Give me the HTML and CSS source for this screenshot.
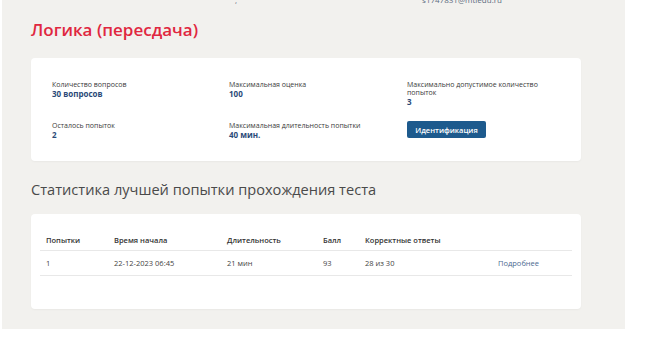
FILE: index.html
```html
<!DOCTYPE html>
<html lang="ru">
<head>
    <meta charset="UTF-8">
    <title>Логика (пересдача)</title>
    <link rel="stylesheet" href="styles.css">
</head>
<body>
    <div class="page">
        <div class="topbar">
            <span class="top-mark">,</span>
            <span class="top-email">s1747831@mtiedu.ru</span>
        </div>

        <h1 class="title">Логика (пересдача)</h1>

        <div class="card info">
            <div class="info-item">
                <div class="info-label">Количество вопросов</div>
                <div class="info-value">30 вопросов</div>
            </div>
            <div class="info-item">
                <div class="info-label">Максимальная оценка</div>
                <div class="info-value">100</div>
            </div>
            <div class="info-item">
                <div class="info-label">Максимально допустимое количество попыток</div>
                <div class="info-value">3</div>
            </div>
            <div class="info-item">
                <div class="info-label">Осталось попыток</div>
                <div class="info-value">2</div>
            </div>
            <div class="info-item">
                <div class="info-label">Максимальная длительность попытки</div>
                <div class="info-value">40 мин.</div>
            </div>
            <div class="info-item">
                <button class="btn">Идентификация</button>
            </div>
        </div>

        <h2 class="subtitle">Статистика лучшей попытки прохождения теста</h2>

        <div class="card stats">
            <table class="stats-table">
                <thead>
                    <tr>
                        <th class="c1">Попытки</th>
                        <th class="c2">Время начала</th>
                        <th class="c3">Длительность</th>
                        <th class="c4">Балл</th>
                        <th class="c5">Корректные ответы</th>
                        <th class="c6"></th>
                    </tr>
                </thead>
                <tbody>
                    <tr>
                        <td>1</td>
                        <td>22-12-2023 06:45</td>
                        <td>21 мин</td>
                        <td>93</td>
                        <td>28 из 30</td>
                        <td><a href="#" class="more">Подробнее</a></td>
                    </tr>
                </tbody>
            </table>
        </div>
    </div>
</body>
</html>
```

FILE: styles.css
```css
* {
    box-sizing: border-box;
    margin: 0;
    padding: 0;
}

body {
    background: #fff;
    font-family: "Open Sans", "Liberation Sans", sans-serif;
}

.page {
    margin-left: 2px;
    width: 623px;
    height: 329px;
    background: #f2f1ee;
    padding: 0 29px;
}

.topbar {
    height: 5px;
    overflow: hidden;
    display: flex;
    align-items: flex-end;
    font-size: 8px;
    line-height: 10px;
    color: #5c6b80;
}

.top-mark {
    margin-left: 204px;
}

.top-email {
    margin-left: 185px;
}

.title {
    margin-top: 13px;
    font-size: 17px;
    line-height: 24px;
    font-weight: 600;
    color: #e0273f;
}

.card {
    background: #fff;
    border-radius: 4px;
    box-shadow: 0 1px 2px rgba(0, 0, 0, 0.04);
    width: 550px;
}

.info {
    margin-top: 16px;
    padding: 23px 21px 22px;
    display: grid;
    grid-template-columns: 177px 178px 132px;
    row-gap: 16px;
}

.info-label {
    font-size: 7px;
    line-height: 8px;
    color: #3a3a3a;
}

.info-value {
    font-size: 8px;
    line-height: 9px;
    font-weight: 700;
    color: #2b4a78;
}

.btn {
    display: block;
    margin-top: -1px;
    background: #1d5a8d;
    color: #fff;
    border: none;
    border-radius: 2px;
    font-family: "Open Sans", "Liberation Sans", sans-serif;
    font-size: 7.5px;
    font-weight: 600;
    width: 79px;
    height: 17px;
}

.subtitle {
    margin-top: 18px;
    font-size: 14.6px;
    line-height: 20px;
    font-weight: 400;
    color: #4a4a4a;
}

.stats {
    margin-top: 15px;
    padding: 17px 9px 33px;
}

.stats-table {
    width: 532px;
    border-collapse: collapse;
    font-size: 7.5px;
    color: #444;
}

.stats-table th {
    text-align: left;
    font-weight: 600;
    color: #333;
    height: 19px;
    padding-left: 6px;
    border-bottom: 1px solid #e8e8e8;
}

.stats-table td {
    padding-left: 6px;
    height: 25px;
    border-bottom: 1px solid #e8e8e8;
}

.c1 { width: 68px; }
.c2 { width: 113px; }
.c3 { width: 96px; }
.c4 { width: 42px; }
.c5 { width: 133px; }
.c6 { width: 80px; }

.more {
    color: #4c6a90;
    text-decoration: none;
}
```
